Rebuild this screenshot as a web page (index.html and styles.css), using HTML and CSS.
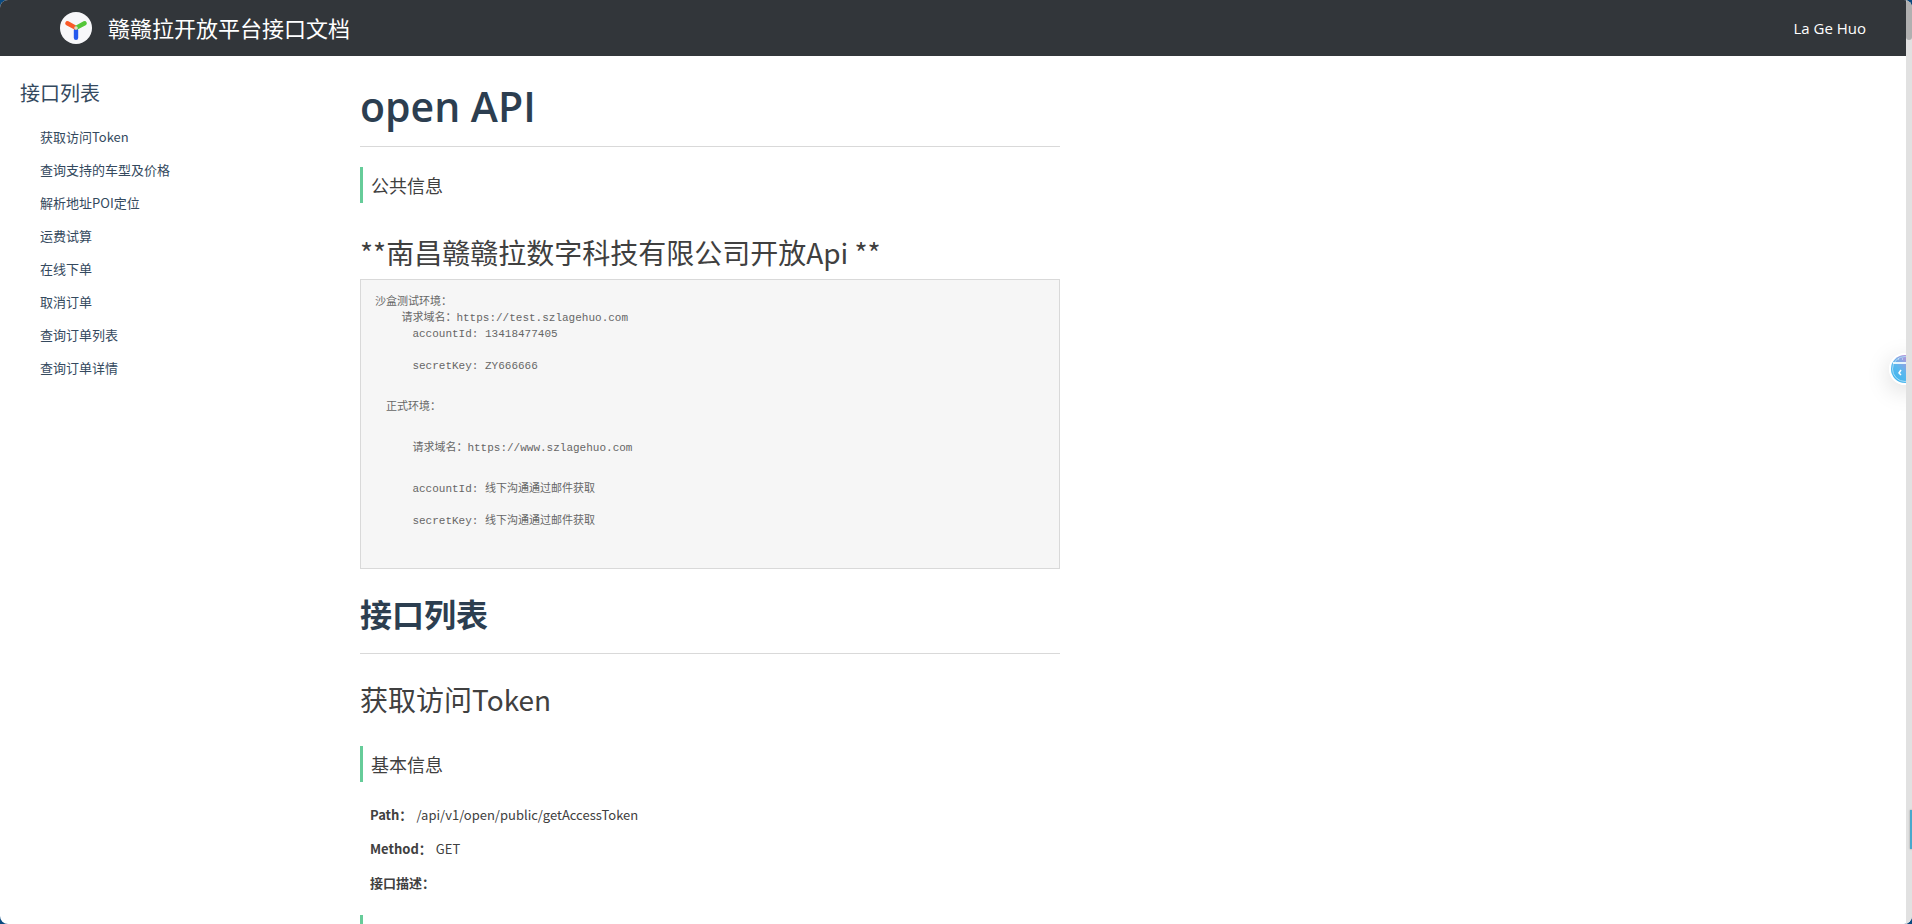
FILE: index.html
```html
<!DOCTYPE html>
<html lang="zh-CN">

<head>
    <title>赣赣拉开放平台接口文档</title>
    <meta charset="utf-8">
    <meta name="viewport" content="width=device-width, initial-scale=1.0">
    <link rel="stylesheet" href="styles.css">
</head>

<body>
    <div class="page">
        <header class="header">
            <svg class="logo" viewBox="0 0 32 32">
                <circle cx="16" cy="16" r="16" fill="#f7f7f9" />
                <g fill="none" stroke-width="4.4" stroke-linecap="round">
                    <path d="M16 18V25.8" stroke="#2459ee" />
                    <path d="M15 15.4L7.4 11.2" stroke="#fa5a28" />
                    <path d="M17 15.4L24.6 11.2" stroke="#54c639" />
                </g>
                <circle cx="16" cy="16" r="1.8" fill="#e4d9c4" />
            </svg>
            <span class="title">赣赣拉开放平台接口文档</span>
            <span class="user">La Ge Huo</span>
        </header>

        <div class="content">
            <nav class="menu">
                <a class="menu-title" href="#list">接口列表</a>
                <a class="menu-item" href="#token">获取访问Token</a>
                <a class="menu-item" href="#">查询支持的车型及价格</a>
                <a class="menu-item" href="#">解析地址POI定位</a>
                <a class="menu-item" href="#">运费试算</a>
                <a class="menu-item" href="#">在线下单</a>
                <a class="menu-item" href="#">取消订单</a>
                <a class="menu-item" href="#">查询订单列表</a>
                <a class="menu-item" href="#">查询订单详情</a>
            </nav>

            <main class="doc">
                <h1 class="name">open API</h1>
                <h3>公共信息</h3>
                <h2 class="company">**南昌赣赣拉数字科技有限公司开放Api **</h2>
                <div class="code">
<pre>沙盒测试环境：
    请求域名：https://test.szlagehuo.com
&#12288;    accountId: 13418477405

&#12288;    secretKey: ZY666666</pre>
<pre>&#12288;正式环境：</pre>
<pre>&#12288;    请求域名：https://www.szlagehuo.com</pre>
<pre>&#12288;    accountId: 线下沟通通过邮件获取

&#12288;    secretKey: 线下沟通通过邮件获取</pre>
                </div>

                <h1 class="section" id="list">接口列表</h1>
                <h2 id="token">获取访问Token</h2>
                <h3>基本信息</h3>
                <div class="info">
                    <p><strong>Path：</strong>/api/v1/open/public/getAccessToken</p>
                    <p><strong>Method：</strong>GET</p>
                    <p><strong>接口描述：</strong></p>
                </div>
                <h3></h3>
            </main>
        </div>

        <!-- floating helper button -->
        <button class="helper" aria-label="helper">
            <svg viewBox="0 0 32 32">
                <defs>
                    <linearGradient id="sky" x1="0" y1="1" x2="1" y2="0">
                        <stop offset="0" stop-color="#35b5ee" />
                        <stop offset="0.4" stop-color="#5ab8ee" />
                        <stop offset="0.8" stop-color="#c48fd6" />
                    </linearGradient>
                </defs>
                <circle cx="16" cy="16" r="16" fill="#fff" />
                <circle cx="16" cy="16" r="14" fill="url(#sky)" />
                <circle cx="16" cy="16" r="12.5" fill="none" stroke="#a9dcf6" stroke-width="1" />
                <path d="M4 10H28" stroke="#e6f6fd" stroke-width="2" />
                <path d="M9 6H10M13 6H14" stroke="#d5effb" stroke-width="1" />
                <path d="M12 17L10 20L12 22" fill="none" stroke="#fff" stroke-width="1.5" />
            </svg>
        </button>
        <div class="track">
            <div class="thumb"></div>
            <div class="mark"></div>
        </div>
    </div>
</body>

</html>
```

FILE: styles.css
```css
body {
    margin: 0;
    background: #0a4a80;
    font-family: "Noto Sans CJK SC", sans-serif;
    font-size: 13px;
    color: #404040;
}

.page {
    position: relative;
    height: 100vh;
    overflow: hidden;
    background: #fff;
    border-radius: 8px;
}

.header {
    display: flex;
    align-items: center;
    height: 56px;
    padding: 0 46px 0 60px;
    background: #32363a;
    color: #fff;
}

.logo {
    width: 32px;
    height: 32px;
    margin-right: 16px;
}

.title {
    padding-bottom: 2px;
    font-size: 22px;
}

.user {
    margin-left: auto;
    font-family: "Open Sans", sans-serif;
    font-size: 15px;
}

.content {
    display: flex;
}

.menu {
    width: 340px;
    padding: 20px 0 0 20px;
    box-sizing: border-box;
    flex-shrink: 0;
}

.menu a {
    display: block;
    color: #34495e;
    text-decoration: none;
}

.menu .menu-title {
    margin-bottom: 11px;
    font-size: 20px;
    line-height: 33px;
}

.menu .menu-item {
    padding-left: 20px;
    line-height: 33px;
}

.doc {
    flex: 1;
    max-width: 700px;
    padding: 20px;
}

h1 {
    margin: 0 0 20px;
    border-bottom: 1px solid #d9d9d9;
    color: #2c3e50;
}

h2 {
    margin: 0 0 26px;
    font-size: 28px;
    line-height: 42px;
    font-weight: 400;
}

h3 {
    min-height: 36px;
    margin: 0 0 16px;
    padding-left: 8px;
    border-left: 3px solid #66cc99;
    font-size: 18px;
    line-height: 36px;
    font-weight: 400;
}

.name {
    font-family: "Open Sans", sans-serif;
    font-size: 41px;
    line-height: 60px;
    padding-bottom: 10px;
    font-weight: 600;
}

.company {
    margin: 28px 0 6px;
}

.code {
    display: flex;
    flex-direction: column;
    gap: 25px;
    padding: 14px 14px 39px;
    margin-bottom: 20px;
    border: 1px solid #d9d9d9;
    background: #f6f6f6;
    color: #666;
}

pre {
    margin: 0;
    font-family: "Liberation Mono", "Noto Sans CJK SC", monospace;
    font-size: 11px;
    line-height: 16px;
}

.section {
    margin-bottom: 24px;
    padding-bottom: 16px;
    font-size: 32px;
    line-height: 48px;
}

.info {
    padding-left: 10px;
    margin-bottom: 15px;
}

.info p {
    margin: 0;
    line-height: 34px;
}

.info strong {
    margin-right: 4px;
}

.helper {
    position: absolute;
    top: 353px;
    right: -9px;
    width: 32px;
    height: 32px;
    padding: 0;
    border: none;
    border-radius: 50%;
    background: none;
    box-shadow: 0 6px 24px rgba(0, 0, 0, 0.15);
}

.helper svg {
    display: block;
}

.track {
    position: absolute;
    top: 0;
    right: 0;
    width: 6px;
    height: 100%;
    background: #e1e1e1;
}

.thumb {
    height: 40px;
    border-radius: 3px;
    background: #b0b0b0;
}

.mark {
    position: absolute;
    top: 810px;
    right: 0;
    width: 2px;
    height: 39px;
    background: #48a9cc;
    box-shadow: 0 0 2px #888;
}
```
